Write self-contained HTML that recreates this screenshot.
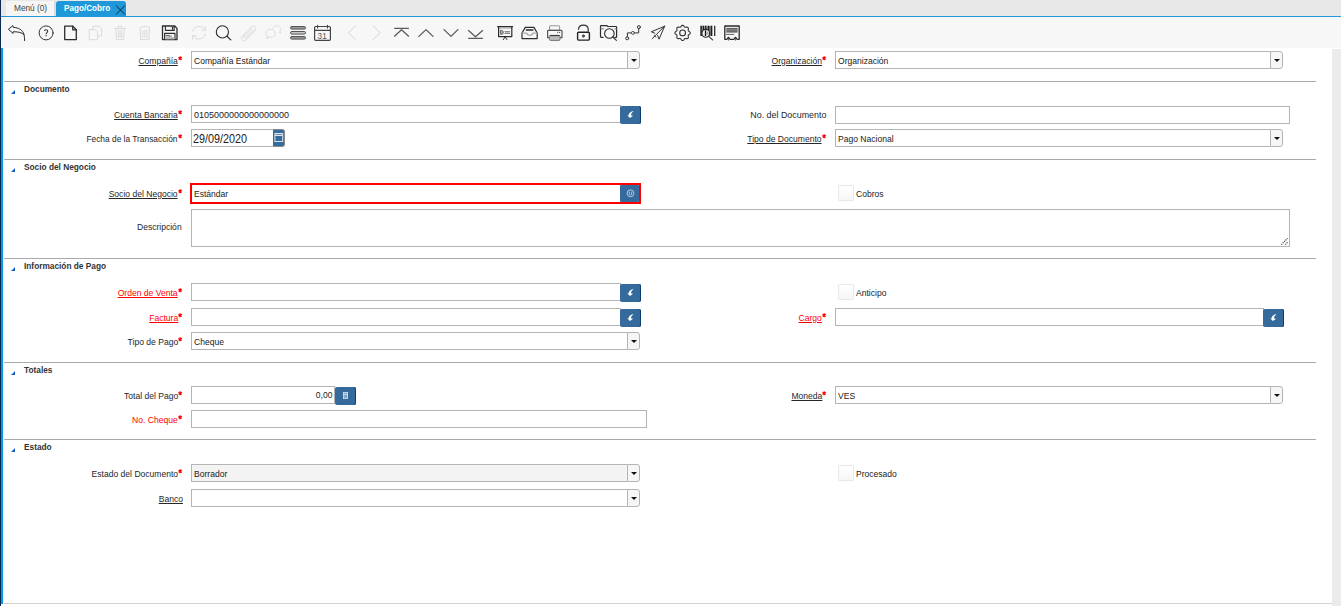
<!DOCTYPE html><html><head><meta charset="utf-8"><style>
*{margin:0;padding:0;box-sizing:border-box}
html,body{width:1341px;height:606px;overflow:hidden;background:#fff;position:relative;font-family:"Liberation Sans",sans-serif}
.t{position:absolute;white-space:nowrap;line-height:12px;font-family:"Liberation Sans",sans-serif}
.ast{position:absolute}
.inp{position:absolute;border:1px solid #b4b4b4;background:#fff}
.dd{position:absolute;border:1px solid #b4b4b4;border-radius:0 3px 3px 0;background:#f6f6f6}
.dd i{position:absolute;left:3px;top:7px;width:0;height:0;border-left:3px solid transparent;border-right:3px solid transparent;border-top:3px solid #111}
.btn{position:absolute;background:#356a9c;border-radius:2px;overflow:hidden;box-shadow:inset -1px 0 #0d3d6b}
.btn svg{display:block}
.sep{position:absolute;left:4px;width:1312px;height:1px;background:#aaaaaa}
.tri{position:absolute;left:11px;width:0;height:0;border-left:4px solid transparent;border-bottom:4px solid #1a5fc8}
.chk{position:absolute;width:16px;height:16px;border:1px solid #e8e8e8;border-radius:1px;background:linear-gradient(#fff,#f6f6f6)}
</style></head><body><div style="position:absolute;left:0;top:0;width:1341px;height:16px;background:#e8e8e8"></div>
<div style="position:absolute;left:6px;top:1px;width:50px;height:15px;background:#f5f5f5;border-right:2px solid #dcdcdc"></div>
<div class="t" style="left:14px;top:2px;font-size:9px;font-weight:normal;color:#444;transform:scaleX(0.92);transform-origin:0 0;">Menú (0)</div>
<div style="position:absolute;left:56px;top:1px;width:70px;height:16px;background:#1f98da;border-radius:3px 3px 0 0"></div>
<div class="t" style="left:64px;top:2px;font-size:9px;font-weight:normal;color:#fff;transform:scaleX(0.96);transform-origin:0 0;font-weight:bold;transform:scaleX(0.905)">Pago/Cobro</div>
<svg style="position:absolute;left:115px;top:5px" width="11" height="10" viewBox="0 0 11 10"><path d="M1 .5l9 9M10 .5l-9 9" stroke="#123" stroke-width="1" fill="none"/></svg>
<div style="position:absolute;left:1px;top:16px;width:1340px;height:1px;background:#1f98da"></div>
<div style="position:absolute;left:1px;top:17px;width:1340px;height:31px;background:#f7f7f7"></div>
<div style="position:absolute;left:0;top:0;width:1px;height:606px;background:#0a2a52"></div>
<div style="position:absolute;left:1px;top:48px;width:2px;height:556px;background:#0a96e0"></div>
<div style="position:absolute;left:4px;top:603px;width:1328px;height:1px;background:#d2d2d2"></div>
<div style="position:absolute;left:1332px;top:49px;width:9px;height:557px;background:#ebebeb"></div>
<div class="t" style="right:1163px;top:55px;font-size:9.5px;font-weight:normal;color:#262626;transform:scaleX(0.9);transform-origin:100% 0;text-decoration:underline;text-underline-offset:1px;">Compañía</div>
<svg class="ast" style="left:178px;top:56px" width="5" height="5" viewBox="0 0 5 5"><path d="M2.2 .2V4.2M.5 1.2L3.9 3.2M.5 3.2L3.9 1.2" stroke="#f00" stroke-width="1.2"/></svg>
<div class="inp" style="left:191px;top:51px;width:436px;height:18px;background:#fff;border-right:none"></div>
<div class="dd" style="left:627px;top:51px;width:13px;height:18px"><i></i></div>
<div class="t" style="left:194px;top:55px;font-size:9.5px;font-weight:normal;color:#222;transform:scaleX(0.9);transform-origin:0 0;">Compañía Estándar</div>
<div class="t" style="right:519px;top:55px;font-size:9.5px;font-weight:normal;color:#262626;transform:scaleX(0.9);transform-origin:100% 0;text-decoration:underline;text-underline-offset:1px;">Organización</div>
<svg class="ast" style="left:822px;top:56px" width="5" height="5" viewBox="0 0 5 5"><path d="M2.2 .2V4.2M.5 1.2L3.9 3.2M.5 3.2L3.9 1.2" stroke="#f00" stroke-width="1.2"/></svg>
<div class="inp" style="left:835px;top:51px;width:435px;height:18px;background:#fff;border-right:none"></div>
<div class="dd" style="left:1270px;top:51px;width:13px;height:18px"><i></i></div>
<div class="t" style="left:838px;top:55px;font-size:9.5px;font-weight:normal;color:#222;transform:scaleX(0.9);transform-origin:0 0;">Organización</div>
<div class="sep" style="top:81px"></div>
<div class="tri" style="top:90px"></div>
<div class="t" style="left:24px;top:83px;font-size:8.3px;font-weight:bold;color:#333;transform:scaleX(1);transform-origin:0 0;">Documento</div>
<div class="t" style="right:1163px;top:109px;font-size:9.5px;font-weight:normal;color:#262626;transform:scaleX(0.9);transform-origin:100% 0;text-decoration:underline;text-underline-offset:1px;">Cuenta Bancaria</div>
<svg class="ast" style="left:178px;top:110px" width="5" height="5" viewBox="0 0 5 5"><path d="M2.2 .2V4.2M.5 1.2L3.9 3.2M.5 3.2L3.9 1.2" stroke="#f00" stroke-width="1.2"/></svg>
<div class="inp" style="left:191px;top:105px;width:430px;height:18px"></div>
<div class="btn" style="left:620px;top:106px;width:21px;height:18px"><svg width="21" height="18" viewBox="0 0 21 18"><path d="M13.9 5.1 C10.8 5.5 8.5 7.4 8.7 9.5 L7.2 9.3 L9.9 12.1 L13.1 9.7 L11.1 9.6 C10.9 7.9 11.9 6.3 13.9 5.1 Z" fill="#fff"/></svg></div>
<div class="t" style="left:194px;top:109px;font-size:9.5px;font-weight:normal;color:#222;transform:scaleX(0.947);transform-origin:0 0;">0105000000000000000</div>
<div class="t" style="right:515px;top:109px;font-size:9.5px;font-weight:normal;color:#262626;transform:scaleX(0.935);transform-origin:100% 0;">No. del Documento</div>
<div class="inp" style="left:835px;top:106px;width:455px;height:18px;"></div>
<div class="t" style="right:1163px;top:133px;font-size:9.5px;font-weight:normal;color:#262626;transform:scaleX(0.88);transform-origin:100% 0;">Fecha de la Transacción</div>
<svg class="ast" style="left:178px;top:134px" width="5" height="5" viewBox="0 0 5 5"><path d="M2.2 .2V4.2M.5 1.2L3.9 3.2M.5 3.2L3.9 1.2" stroke="#f00" stroke-width="1.2"/></svg>
<div class="inp" style="left:191px;top:129px;width:83px;height:18px;"></div>
<div class="t" style="left:193px;top:133px;font-size:12px;font-weight:normal;color:#222;transform:scaleX(0.9);transform-origin:0 0;">29/09/2020</div>
<div class="btn" style="left:273px;top:129px;width:12px;height:18px;border-radius:0 3px 3px 0;border:1px solid #8a8a8a;border-left:none;box-shadow:none"><svg style="position:absolute;left:0;top:-1px" width="12" height="18" viewBox="0 0 12 18"><rect x="1.9" y="4.5" width="7.8" height="8" fill="none" stroke="#dae6f2" stroke-width="1"/><path d="M1.9 6.3h7.8" stroke="#dae6f2" stroke-width="1.2"/><path d="M3.6 3.8v1.4M8 3.8v1.4" stroke="#dae6f2" stroke-width=".9"/></svg></div>
<div class="t" style="right:519px;top:133px;font-size:9.5px;font-weight:normal;color:#262626;transform:scaleX(0.9);transform-origin:100% 0;text-decoration:underline;text-underline-offset:1px;">Tipo de Documento</div>
<svg class="ast" style="left:822px;top:134px" width="5" height="5" viewBox="0 0 5 5"><path d="M2.2 .2V4.2M.5 1.2L3.9 3.2M.5 3.2L3.9 1.2" stroke="#f00" stroke-width="1.2"/></svg>
<div class="inp" style="left:835px;top:129px;width:435px;height:18px;background:#fff;border-right:none"></div>
<div class="dd" style="left:1270px;top:129px;width:13px;height:18px"><i></i></div>
<div class="t" style="left:838px;top:133px;font-size:9.5px;font-weight:normal;color:#222;transform:scaleX(0.9);transform-origin:0 0;">Pago Nacional</div>
<div class="sep" style="top:159px"></div>
<div class="tri" style="top:168px"></div>
<div class="t" style="left:24px;top:161px;font-size:8.3px;font-weight:bold;color:#333;transform:scaleX(1);transform-origin:0 0;">Socio del Negocio</div>
<div class="t" style="right:1163px;top:188px;font-size:9.5px;font-weight:normal;color:#262626;transform:scaleX(0.9);transform-origin:100% 0;text-decoration:underline;text-underline-offset:1px;">Socio del Negocio</div>
<svg class="ast" style="left:178px;top:189px" width="5" height="5" viewBox="0 0 5 5"><path d="M2.2 .2V4.2M.5 1.2L3.9 3.2M.5 3.2L3.9 1.2" stroke="#f00" stroke-width="1.2"/></svg>
<div style="position:absolute;left:190px;top:183px;width:451px;height:21px;border:2px solid #ff0000;background:#fff"></div>
<div class="btn" style="left:620px;top:185px;width:19px;height:17px;border-radius:1px;box-shadow:none"><svg width="19" height="17" viewBox="0 0 19 17"><circle cx="10.5" cy="8.3" r="3.4" fill="none" stroke="#b9cfe4" stroke-width="1"/><path d="M9.3 6.6v2.6M11.7 6.6v2.6M9.3 9.2 Q10.5 10.6 11.7 9.2" fill="none" stroke="#b9cfe4" stroke-width=".9"/></svg></div>
<div class="t" style="left:194px;top:188px;font-size:9.5px;font-weight:normal;color:#222;transform:scaleX(0.9);transform-origin:0 0;">Estándar</div>
<div class="chk" style="left:838px;top:185px"></div>
<div class="t" style="left:856px;top:188px;font-size:9.5px;font-weight:normal;color:#222;transform:scaleX(0.9);transform-origin:0 0;">Cobros</div>
<div class="t" style="right:1159px;top:221px;font-size:9.5px;font-weight:normal;color:#262626;transform:scaleX(0.9);transform-origin:100% 0;">Descripción</div>
<div class="inp" style="left:191px;top:209px;width:1099px;height:38px;"></div>
<svg style="position:absolute;left:1278px;top:235px" width="12" height="12" viewBox="0 0 12 12"><path d="M3.4 9.6 L9.6 3.3 M7.4 9.6 L9.6 7.3" stroke="#3a3a3a" stroke-width="1.2" stroke-dasharray="1.1 .9"/></svg>
<div class="sep" style="top:258px"></div>
<div class="tri" style="top:267px"></div>
<div class="t" style="left:24px;top:260px;font-size:8.3px;font-weight:bold;color:#333;transform:scaleX(1);transform-origin:0 0;">Información de Pago</div>
<div class="t" style="right:1163px;top:287px;font-size:9.5px;font-weight:normal;color:#ff0000;transform:scaleX(0.9);transform-origin:100% 0;text-decoration:underline;text-underline-offset:1px;">Orden de Venta</div>
<svg class="ast" style="left:178px;top:288px" width="5" height="5" viewBox="0 0 5 5"><path d="M2.2 .2V4.2M.5 1.2L3.9 3.2M.5 3.2L3.9 1.2" stroke="#f00" stroke-width="1.2"/></svg>
<div class="inp" style="left:191px;top:283px;width:430px;height:18px"></div>
<div class="btn" style="left:620px;top:284px;width:21px;height:18px"><svg width="21" height="18" viewBox="0 0 21 18"><path d="M13.9 5.1 C10.8 5.5 8.5 7.4 8.7 9.5 L7.2 9.3 L9.9 12.1 L13.1 9.7 L11.1 9.6 C10.9 7.9 11.9 6.3 13.9 5.1 Z" fill="#fff"/></svg></div>
<div class="chk" style="left:838px;top:284px"></div>
<div class="t" style="left:856px;top:287px;font-size:9.5px;font-weight:normal;color:#222;transform:scaleX(0.9);transform-origin:0 0;">Anticipo</div>
<div class="t" style="right:1163px;top:312px;font-size:9.5px;font-weight:normal;color:#ff0000;transform:scaleX(0.9);transform-origin:100% 0;text-decoration:underline;text-underline-offset:1px;">Factura</div>
<svg class="ast" style="left:178px;top:313px" width="5" height="5" viewBox="0 0 5 5"><path d="M2.2 .2V4.2M.5 1.2L3.9 3.2M.5 3.2L3.9 1.2" stroke="#f00" stroke-width="1.2"/></svg>
<div class="inp" style="left:191px;top:308px;width:430px;height:18px"></div>
<div class="btn" style="left:620px;top:309px;width:21px;height:18px"><svg width="21" height="18" viewBox="0 0 21 18"><path d="M13.9 5.1 C10.8 5.5 8.5 7.4 8.7 9.5 L7.2 9.3 L9.9 12.1 L13.1 9.7 L11.1 9.6 C10.9 7.9 11.9 6.3 13.9 5.1 Z" fill="#fff"/></svg></div>
<div class="t" style="right:519px;top:312px;font-size:9.5px;font-weight:normal;color:#ff0000;transform:scaleX(0.9);transform-origin:100% 0;text-decoration:underline;text-underline-offset:1px;">Cargo</div>
<svg class="ast" style="left:822px;top:313px" width="5" height="5" viewBox="0 0 5 5"><path d="M2.2 .2V4.2M.5 1.2L3.9 3.2M.5 3.2L3.9 1.2" stroke="#f00" stroke-width="1.2"/></svg>
<div class="inp" style="left:835px;top:308px;width:429px;height:18px"></div>
<div class="btn" style="left:1263px;top:309px;width:21px;height:18px"><svg width="21" height="18" viewBox="0 0 21 18"><path d="M13.9 5.1 C10.8 5.5 8.5 7.4 8.7 9.5 L7.2 9.3 L9.9 12.1 L13.1 9.7 L11.1 9.6 C10.9 7.9 11.9 6.3 13.9 5.1 Z" fill="#fff"/></svg></div>
<div class="t" style="right:1163px;top:336px;font-size:9.5px;font-weight:normal;color:#262626;transform:scaleX(0.9);transform-origin:100% 0;">Tipo de Pago</div>
<svg class="ast" style="left:178px;top:337px" width="5" height="5" viewBox="0 0 5 5"><path d="M2.2 .2V4.2M.5 1.2L3.9 3.2M.5 3.2L3.9 1.2" stroke="#f00" stroke-width="1.2"/></svg>
<div class="inp" style="left:191px;top:332px;width:436px;height:18px;background:#fff;border-right:none"></div>
<div class="dd" style="left:627px;top:332px;width:13px;height:18px"><i></i></div>
<div class="t" style="left:194px;top:336px;font-size:9.5px;font-weight:normal;color:#222;transform:scaleX(0.9);transform-origin:0 0;">Cheque</div>
<div class="sep" style="top:362px"></div>
<div class="tri" style="top:371px"></div>
<div class="t" style="left:24px;top:364px;font-size:8.3px;font-weight:bold;color:#333;transform:scaleX(1);transform-origin:0 0;">Totales</div>
<div class="t" style="right:1163px;top:390px;font-size:9.5px;font-weight:normal;color:#262626;transform:scaleX(0.9);transform-origin:100% 0;">Total del Pago</div>
<svg class="ast" style="left:178px;top:391px" width="5" height="5" viewBox="0 0 5 5"><path d="M2.2 .2V4.2M.5 1.2L3.9 3.2M.5 3.2L3.9 1.2" stroke="#f00" stroke-width="1.2"/></svg>
<div class="inp" style="left:191px;top:386px;width:144px;height:18px;"></div>
<div class="t" style="right:1009px;top:389px;font-size:9.5px;font-weight:normal;color:#222;transform:scaleX(0.9);transform-origin:100% 0;">0,00</div>
<div class="btn" style="left:335px;top:387px;width:21px;height:18px"><svg width="21" height="18" viewBox="0 0 21 18"><rect x="8" y="5" width="5" height="7" fill="#cfe0ef"/><path d="M8.8 6.3h3.4M8.8 8.3h3.4M8.8 9.6h3.4M8.8 10.8h3.4" stroke="#356a9c" stroke-width=".6"/></svg></div>
<div class="t" style="right:519px;top:390px;font-size:9.5px;font-weight:normal;color:#262626;transform:scaleX(0.9);transform-origin:100% 0;text-decoration:underline;text-underline-offset:1px;">Moneda</div>
<svg class="ast" style="left:822px;top:391px" width="5" height="5" viewBox="0 0 5 5"><path d="M2.2 .2V4.2M.5 1.2L3.9 3.2M.5 3.2L3.9 1.2" stroke="#f00" stroke-width="1.2"/></svg>
<div class="inp" style="left:835px;top:386px;width:435px;height:18px;background:#fff;border-right:none"></div>
<div class="dd" style="left:1270px;top:386px;width:13px;height:18px"><i></i></div>
<div class="t" style="left:838px;top:390px;font-size:9.5px;font-weight:normal;color:#222;transform:scaleX(0.9);transform-origin:0 0;">VES</div>
<div class="t" style="right:1163px;top:414px;font-size:9.5px;font-weight:normal;color:#ff0000;transform:scaleX(0.9);transform-origin:100% 0;">No. Cheque</div>
<svg class="ast" style="left:178px;top:415px" width="5" height="5" viewBox="0 0 5 5"><path d="M2.2 .2V4.2M.5 1.2L3.9 3.2M.5 3.2L3.9 1.2" stroke="#f00" stroke-width="1.2"/></svg>
<div class="inp" style="left:191px;top:410px;width:456px;height:18px;"></div>
<div class="sep" style="top:439px"></div>
<div class="tri" style="top:448px"></div>
<div class="t" style="left:24px;top:441px;font-size:8.3px;font-weight:bold;color:#333;transform:scaleX(1);transform-origin:0 0;">Estado</div>
<div class="t" style="right:1163px;top:468px;font-size:9.5px;font-weight:normal;color:#262626;transform:scaleX(0.9);transform-origin:100% 0;">Estado del Documento</div>
<svg class="ast" style="left:178px;top:469px" width="5" height="5" viewBox="0 0 5 5"><path d="M2.2 .2V4.2M.5 1.2L3.9 3.2M.5 3.2L3.9 1.2" stroke="#f00" stroke-width="1.2"/></svg>
<div class="inp" style="left:191px;top:464px;width:436px;height:18px;background:#f3f3f3;border-right:none"></div>
<div class="dd" style="left:627px;top:464px;width:13px;height:18px"><i></i></div>
<div class="t" style="left:194px;top:468px;font-size:9.5px;font-weight:normal;color:#222;transform:scaleX(0.9);transform-origin:0 0;">Borrador</div>
<div class="chk" style="left:838px;top:465px"></div>
<div class="t" style="left:856px;top:468px;font-size:9.5px;font-weight:normal;color:#222;transform:scaleX(0.9);transform-origin:0 0;">Procesado</div>
<div class="t" style="right:1158px;top:493px;font-size:9.5px;font-weight:normal;color:#262626;transform:scaleX(0.9);transform-origin:100% 0;text-decoration:underline;text-underline-offset:1px;">Banco</div>
<div class="inp" style="left:191px;top:489px;width:436px;height:18px;background:#fff;border-right:none"></div>
<div class="dd" style="left:627px;top:489px;width:13px;height:18px"><i></i></div>
<svg style="position:absolute;left:0;top:0" width="760" height="48" viewBox="0 0 760 48" fill="none" stroke-linejoin="round" stroke-linecap="round">
<!-- undo -->
<path d="M12.9 33.2 L8.4 29.3 L12.9 25.6 L13.3 27.4 C18.5 27.6 23 30 24 34.6 C24.5 36.5 24.6 38.5 24.6 40.6 M24 34.6 C22 32.6 18.5 31.8 13.3 31.7 L12.9 33.2" stroke="#2d2d2d" stroke-width="1"/>
<!-- help -->
<circle cx="46.1" cy="32.9" r="7" stroke="#333" stroke-width="1"/>
<path d="M44.5 31.1 C44.5 29.3 47.7 29.2 47.7 31.1 C47.7 32.6 46.1 32.7 46.1 34.3" stroke="#333" stroke-width="1.05" stroke-linecap="butt"/>
<rect x="45.5" y="35.2" width="1.2" height="1.1" fill="#333"/>
<!-- new doc -->
<path d="M64.7 26.2 H72.7 L76.3 29.8 V39.6 H64.7 Z" stroke="#2d2d2d" stroke-width="1.3"/>
<path d="M72.7 26.2 V29.8 H76.3" stroke="#2d2d2d" stroke-width="1.2"/>
<!-- copy disabled -->
<path d="M92.9 28.5 V26.3 H99.2 L101.6 28.7 V36 H98.2" stroke="#dadada" stroke-width="1"/>
<path d="M89.6 29.6 H95.6 L97.6 31.6 V39.7 H89.6 Z" stroke="#dadada" stroke-width="1"/>
<!-- trash 1 disabled -->
<path d="M114.6 28.4 H125.6 M118.2 28.2 V26 H121.8 V28.2 M115.8 28.6 L116.6 39.6 H123.6 L124.4 28.6 M118.4 30.5 V37.5 M120.1 30.5 V37.5 M121.8 30.5 V37.5" stroke="#dadada" stroke-width="1"/>
<!-- trash 2 disabled -->
<path d="M140.2 28 C140.2 26 149.6 26 149.6 28 L148.8 39.6 H141 Z M142.8 30.5 V37.5 M144.9 30.5 V37.5 M147 30.5 V37.5" stroke="#dadada" stroke-width="1"/>
<!-- save -->
<path d="M162.5 26 H174.8 L177 28.4 V39.6 H162.5 Z" stroke="#2d2d2d" stroke-width="1.3"/>
<path d="M165.4 26.2 V30.4 H174.2 V26.2" stroke="#2d2d2d" stroke-width="1.1"/>
<path d="M172.5 27.2 V29.2" stroke="#2d2d2d" stroke-width="1.1"/>
<path d="M164.6 39.4 V33.4 H175 V39.4" stroke="#2d2d2d" stroke-width="1.1"/>
<rect x="165.1" y="37.2" width="9.4" height="2.2" fill="#b5b5b5"/>
<path d="M166 35.4 H168.6 M166 35.9 H169.6 M169.4 36.1 H171.6" stroke="#444" stroke-width=".7"/>
<!-- refresh disabled -->
<path d="M205.1 30 A6.8 6.8 0 0 0 192.6 31.2 M192.9 35.4 A6.8 6.8 0 0 0 205.4 34.2" stroke="#dadada" stroke-width="1"/>
<path d="M205.4 26.5 V30.2 H201.8 M192.6 39.4 V35.6 H196.2" stroke="#dadada" stroke-width="1"/>
<!-- search -->
<circle cx="222.4" cy="31.9" r="6.1" stroke="#2d2d2d" stroke-width="1.1"/>
<path d="M226.9 36.3 L230.8 39.9" stroke="#2d2d2d" stroke-width="1.2"/>
<!-- paperclip disabled -->
<path d="M246 38.3 L254.8 29.5 C257 27.3 254 24.3 251.8 26.5 L242.4 35.9 C239.4 38.9 243.4 42.6 246.4 39.6 L255.8 30.2 M251.8 30.5 L245 37.3 C243.9 38.4 242.7 37.2 243.8 36.1 L252 27.9" stroke="#dadada" stroke-width="0.9"/>
<!-- chat disabled -->
<path d="M272.6 28.3 C273.5 26.2 275.6 25.4 277.4 25.8 C280.4 26.4 281.4 29.4 280 31.6 L280.8 33 L279.2 32.4" stroke="#dadada" stroke-width="0.9"/>
<ellipse cx="270.6" cy="33.3" rx="4.8" ry="4" stroke="#dadada" stroke-width="0.9"/>
<path d="M267.6 36.6 L266.4 38.6 L269.2 37.2" stroke="#dadada" stroke-width="0.9"/>
<!-- grid toggle -->
<rect x="290.5" y="26.5" width="15" height="2.6" rx="1.3" fill="#999" stroke="#555" stroke-width="1"/>
<rect x="290.5" y="31.5" width="15" height="2.6" rx="1.3" fill="#c8c8c8" stroke="#555" stroke-width="1"/>
<rect x="290.5" y="36.5" width="15" height="2.6" rx="1.3" fill="#999" stroke="#555" stroke-width="1"/>
<!-- calendar -->
<rect x="314.6" y="26.5" width="15.8" height="13.8" rx="1" stroke="#444" stroke-width="1.2"/>
<path d="M314.6 30.4 H330.4" stroke="#444" stroke-width="1.1"/>
<path d="M317.6 25.2 V28 M327.5 25.2 V28" stroke="#444" stroke-width="1.1"/>
<text x="317.6" y="38.8" font-family="Liberation Sans" font-size="8.2" fill="#555" stroke="none">31</text>
<!-- prev/next disabled -->
<path d="M355.3 26 L348.5 32.8 L355.3 39.6 M373.2 26 L380 32.8 L373.2 39.6" stroke="#d6d6d6" stroke-width="1"/>
<!-- first/up/down/last -->
<path d="M394.2 28.4 H408.9 M394.2 36.4 L401.5 29.8 L408.9 36.4" stroke="#5a5a5a" stroke-width="1.3" stroke-linecap="butt"/>
<path d="M418.9 36.4 L426 29.6 L433 36.4" stroke="#5a5a5a" stroke-width="1.3"/>
<path d="M444 29.6 L451 36.4 L457.9 29.6" stroke="#5a5a5a" stroke-width="1.3"/>
<path d="M468.2 30.2 L475.5 36.8 L482.9 30.2 M468.2 38.4 H482.9" stroke="#5a5a5a" stroke-width="1.3" stroke-linecap="butt"/>
<!-- report -->
<path d="M497.6 26.6 H512.6" stroke="#2d2d2d" stroke-width="1.2"/>
<rect x="497.7" y="27.2" width="14.8" height="1.4" fill="#aaa"/>
<path d="M498.6 27 V36.6 H511.8 V27" stroke="#2d2d2d" stroke-width="1.2"/>
<path d="M500.4 30.5 V34.2 H502 C503 34.2 503.4 33.3 503.4 32.4 C503.4 31.3 503 30.5 502 30.5 Z" fill="#aaa" stroke="#555" stroke-width=".8"/>
<path d="M505 31.6 H509.6 M505 33.4 H509.6" stroke="#888" stroke-width="1.1"/>
<path d="M505.1 37 L503.3 39.6 M505.1 37 L506.9 39.6" stroke="#2d2d2d" stroke-width="1"/>
<!-- inbox -->
<path d="M525.3 27.4 H534 L537.2 33 V38.6 H522 V33 Z" stroke="#2d2d2d" stroke-width="1.2"/>
<path d="M522.4 33.2 H526.8 C527.2 36 532.4 36 532.8 33.2 H537" stroke="#aaa" stroke-width="1.2"/>
<path d="M526.3 30 H533" stroke="#2d2d2d" stroke-width="1.3"/>
<!-- printer -->
<rect x="549.6" y="25.8" width="10" height="4.6" rx="1" stroke="#999" stroke-width="1.1"/>
<path d="M549.2 37.6 H547.6 V31.2 C547.6 30.6 548 30.4 548.6 30.4 H560.8 C561.4 30.4 562 30.6 562 31.2 V37.6 H560.2" stroke="#555" stroke-width="1.2"/>
<rect x="549.4" y="35.4" width="10.6" height="5" rx="1" fill="#bbb" stroke="#777" stroke-width="1"/>
<path d="M550.3 35.6 H559.1" stroke="#333" stroke-width="1"/>
<circle cx="557.8" cy="32.4" r=".55" fill="#555"/><circle cx="559.6" cy="32.4" r=".55" fill="#555"/>
<!-- lock -->
<rect x="577.6" y="32.3" width="11.8" height="7.8" rx="1" stroke="#222" stroke-width="1.4"/>
<path d="M578.6 29.3 C578.6 23.8 588.2 23.8 588.2 29.3 V31.6" stroke="#333" stroke-width="1.2"/>
<ellipse cx="583.4" cy="36" rx="1.1" ry="1.3" fill="#555" stroke="#333" stroke-width=".6"/>
<!-- folder search -->
<path d="M603 37.4 H601.1 C600.6 37.4 600.5 37 600.5 36.6 V26.2 C600.5 25.8 600.8 25.6 601.2 25.6 H606.6 L607.8 26.5 H616 C616.4 26.5 616.6 26.8 616.6 27.2 V36.8 C616.6 37.2 616.4 37.4 616 37.4 H615" stroke="#2d2d2d" stroke-width="1.2"/>
<path d="M601 28.8 H603.4 M615 28.8 H616.2" stroke="#888" stroke-width="1.2"/>
<circle cx="609.4" cy="33.5" r="4.8" stroke="#2d2d2d" stroke-width="1.1"/>
<path d="M612.8 37 L616.4 40.4" stroke="#2d2d2d" stroke-width="1.1"/>
<!-- workflow -->
<path d="M627.4 36.8 V32.9 H631.3 M634.5 32.9 H638.7 V28.7" stroke="#333" stroke-width="1"/>
<circle cx="627.2" cy="38.3" r="1.5" stroke="#333" stroke-width="1"/>
<circle cx="632.9" cy="32.9" r="1.5" stroke="#555" stroke-width="1"/>
<circle cx="638.9" cy="27.1" r="1.5" stroke="#333" stroke-width="1"/>
<!-- paper plane -->
<path d="M664.7 26.2 L651.3 31.8 L654.8 33.2 M664.7 26.2 L659 39.2 L657.6 35.4 M664.7 26.2 L652.2 38.6 M654.4 35.6 L655.8 37.2" stroke="#333" stroke-width="1"/>
<!-- gear -->
<path d="M682.60 25.25 L683.09 25.37 L683.55 25.69 L683.95 26.13 L684.29 26.60 L684.61 26.98 L684.95 27.22 L685.36 27.29 L685.86 27.25 L686.43 27.16 L687.03 27.13 L687.58 27.22 L688.01 27.49 L688.28 27.92 L688.37 28.47 L688.34 29.07 L688.25 29.64 L688.21 30.14 L688.28 30.55 L688.52 30.89 L688.90 31.21 L689.37 31.55 L689.81 31.95 L690.13 32.41 L690.25 32.90 L690.13 33.39 L689.81 33.85 L689.37 34.25 L688.90 34.59 L688.52 34.91 L688.28 35.25 L688.21 35.66 L688.25 36.16 L688.34 36.73 L688.37 37.33 L688.28 37.88 L688.01 38.31 L687.58 38.58 L687.03 38.67 L686.43 38.64 L685.86 38.55 L685.36 38.51 L684.95 38.58 L684.61 38.82 L684.29 39.20 L683.95 39.67 L683.55 40.11 L683.09 40.43 L682.60 40.55 L682.11 40.43 L681.65 40.11 L681.25 39.67 L680.91 39.20 L680.59 38.82 L680.25 38.58 L679.84 38.51 L679.34 38.55 L678.77 38.64 L678.17 38.67 L677.62 38.58 L677.19 38.31 L676.92 37.88 L676.83 37.33 L676.86 36.73 L676.95 36.16 L676.99 35.66 L676.92 35.25 L676.68 34.91 L676.30 34.59 L675.83 34.25 L675.39 33.85 L675.07 33.39 L674.95 32.90 L675.07 32.41 L675.39 31.95 L675.83 31.55 L676.30 31.21 L676.68 30.89 L676.92 30.55 L676.99 30.14 L676.95 29.64 L676.86 29.07 L676.83 28.47 L676.92 27.92 L677.19 27.49 L677.62 27.22 L678.17 27.13 L678.77 27.16 L679.34 27.25 L679.84 27.29 L680.25 27.22 L680.59 26.98 L680.91 26.60 L681.25 26.13 L681.65 25.69 L682.11 25.37 Z" stroke="#333" stroke-width="1.1"/>
<circle cx="682.6" cy="32.9" r="2.9" stroke="#333" stroke-width="1.1"/>
<!-- barcode search -->
<rect x="700" y="25.8" width="12.8" height="10.2" fill="#9a9a9a"/>
<path d="M701.2 25.8 V36 M703.4 25.8 V36 M705.7 25.8 V29.2 M708.4 25.8 V30 M711.4 25.8 V36 M714.7 25.8 V36" stroke="#1e1e1e" stroke-width="1.2" stroke-linecap="butt"/>
<path d="M709.8 26 V35.8" stroke="#666" stroke-width="1.3" stroke-linecap="butt"/>
<circle cx="705.8" cy="33.3" r="3.9" fill="#f2f2f2" stroke="#222" stroke-width="1.1"/>
<path d="M705.5 30.4 V36" stroke="#111" stroke-width="1.3" stroke-linecap="butt"/>
<path d="M706.6 30.8 L708.8 33.2 L706.6 35.6 Z" fill="#999"/>
<path d="M708.8 36.3 L712.6 39.8" stroke="#333" stroke-width="1.1"/>
<!-- receipt -->
<path d="M724.8 39.3 V26 H739.2 V39.3 H737.2 C736.4 39.3 736.2 37.3 735.5 37.3 C734.8 37.3 734.6 39.3 733.8 39.3 H730.2 C729.4 39.3 729.2 37.3 728.5 37.3 C727.8 37.3 727.6 39.3 726.8 39.3 Z" stroke="#2a2a2a" stroke-width="1.3"/>
<path d="M728.5 38 V40.2 M735.5 38 V40.2" stroke="#444" stroke-width=".8"/>
<rect x="726.3" y="27.9" width="11.3" height="4.7" fill="#5e5e5e"/>
<path d="M726.3 29.4 H737.6 M726.3 30.9 H737.6" stroke="#9a9a9a" stroke-width=".6"/>
<path d="M726.4 34.4 H733.8" stroke="#555" stroke-width="0.9"/>
</svg></body></html>
